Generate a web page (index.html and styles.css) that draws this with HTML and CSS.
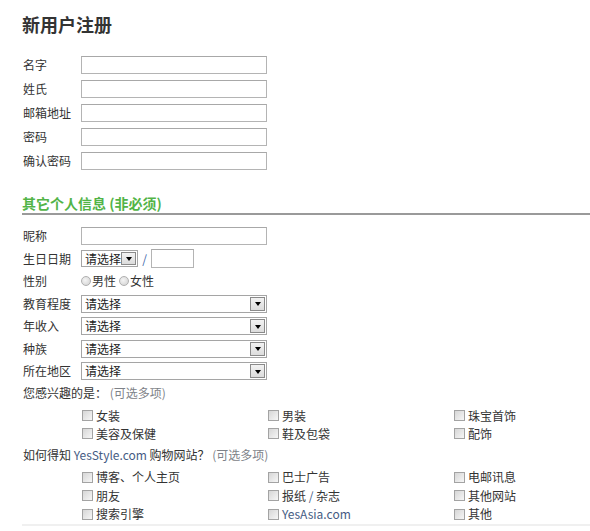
FILE: index.html
```html
<!DOCTYPE html>
<html lang="zh-CN">
<head>
<meta charset="utf-8">
<title>新用户注册</title>
<link rel="stylesheet" href="styles.css">
</head>
<body>
<div class="page">
  <h1 class="title">新用户注册</h1>

  <div class="basic">
    <div class="row"><span class="label">名字</span><span class="input wide"></span></div>
    <div class="row"><span class="label">姓氏</span><span class="input wide"></span></div>
    <div class="row"><span class="label">邮箱地址</span><span class="input wide"></span></div>
    <div class="row"><span class="label">密码</span><span class="input wide"></span></div>
    <div class="row"><span class="label">确认密码</span><span class="input wide"></span></div>
  </div>

  <h2 class="section">其它个人信息 (非必须)</h2>

  <div class="extra">
    <div class="xrow"><span class="label">昵称</span><span class="input wide"></span></div>
    <div class="xrow"><span class="label">生日日期</span>
      <span class="select small"><span class="sel-text">请选择</span><span class="arrow"><i class="tri"></i></span></span>
      <span class="slash">/</span>
      <span class="input year"></span>
    </div>
    <div class="xrow"><span class="label">性别</span>
      <span class="radio"></span><span class="opt">男性</span>
      <span class="radio r2"></span><span class="opt">女性</span>
    </div>
    <div class="xrow"><span class="label">教育程度</span><span class="select wide"><span class="sel-text">请选择</span><span class="arrow"><i class="tri"></i></span></span></div>
    <div class="xrow"><span class="label">年收入</span><span class="select wide"><span class="sel-text">请选择</span><span class="arrow"><i class="tri"></i></span></span></div>
    <div class="xrow"><span class="label">种族</span><span class="select wide"><span class="sel-text">请选择</span><span class="arrow"><i class="tri"></i></span></span></div>
    <div class="xrow"><span class="label">所在地区</span><span class="select wide"><span class="sel-text">请选择</span><span class="arrow"><i class="tri"></i></span></span></div>
  </div>

  <div class="question">您感兴趣的是： <span class="hint">(可选多项)</span></div>
  <div class="checks c1">
    <div class="chk"><span class="box"></span><span class="txt">女装</span></div>
    <div class="chk"><span class="box"></span><span class="txt">男装</span></div>
    <div class="chk"><span class="box"></span><span class="txt">珠宝首饰</span></div>
    <div class="chk"><span class="box"></span><span class="txt">美容及保健</span></div>
    <div class="chk"><span class="box"></span><span class="txt">鞋及包袋</span></div>
    <div class="chk"><span class="box"></span><span class="txt">配饰</span></div>
  </div>

  <div class="question q2">如何得知 <span class="brand">YesStyle.com</span> 购物网站？ <span class="hint">(可选多项)</span></div>
  <div class="checks c2">
    <div class="chk"><span class="box"></span><span class="txt">博客、个人主页</span></div>
    <div class="chk"><span class="box"></span><span class="txt">巴士广告</span></div>
    <div class="chk"><span class="box"></span><span class="txt">电邮讯息</span></div>
    <div class="chk"><span class="box"></span><span class="txt">朋友</span></div>
    <div class="chk"><span class="box"></span><span class="txt">报纸 <span class="brand">/</span> 杂志</span></div>
    <div class="chk"><span class="box"></span><span class="txt">其他网站</span></div>
    <div class="chk"><span class="box"></span><span class="txt">搜索引擎</span></div>
    <div class="chk"><span class="box"></span><span class="txt brand">YesAsia.com</span></div>
    <div class="chk"><span class="box"></span><span class="txt">其他</span></div>
  </div>
</div>
</body>
</html>
```

FILE: styles.css
```css
html, body {
  margin: 0;
  padding: 0;
  background: #fff;
}
body {
  font-family: "Noto Sans CJK SC", "Noto Sans", sans-serif;
  font-size: 12px;
  color: #333;
}
.page {
  padding-left: 22px;
}
.title {
  margin: 0;
  padding-top: 13px;
  font-size: 18px;
  line-height: 22px;
  font-weight: bold;
  color: #333;
}
.basic {
  margin-top: 21px;
  display: flex;
  flex-direction: column;
  gap: 6px;
}
.row {
  display: flex;
  align-items: center;
  height: 18px;
}
.label {
  width: 59px;
  flex: none;
  padding-left: 1px;
  box-sizing: border-box;
  line-height: 16px;
}
.input {
  display: block;
  box-sizing: border-box;
  height: 18px;
  border: 1px solid #b4b4b4;
  border-top-color: #a8a8a8;
  background: #fff;
}
.input.wide {
  width: 186px;
}
.input.year {
  width: 43px;
  height: 19px;
}
.section {
  margin: 24px 0 0 0;
  font-size: 14px;
  line-height: 18px;
  font-weight: bold;
  color: #52b447;
  padding-bottom: 1px;
  border-bottom: 2px solid #9a9a9a;
}
.extra {
  margin-top: 10px;
}
.xrow {
  display: flex;
  align-items: center;
  height: 22.5px;
}
.select {
  display: flex;
  align-items: center;
  box-sizing: border-box;
  height: 18px;
  border: 1px solid #a5a5a5;
  background: #fff;
  padding: 1px;
}
.select.wide {
  width: 186px;
}
.select.small {
  width: 57px;
  height: 17px;
}
.sel-text {
  flex: 1;
  padding-left: 2px;
  line-height: 14px;
  color: #222;
}
.arrow {
  display: flex;
  align-items: center;
  justify-content: center;
  box-sizing: border-box;
  width: 15px;
  height: 14px;
  border: 1px solid #8a8a8a;
  background: linear-gradient(#f2f2f2, #dcdcdc);
}
.select.small .arrow {
  height: 13px;
}
.tri {
  display: block;
  width: 0;
  height: 0;
  border-left: 3.5px solid transparent;
  border-right: 3.5px solid transparent;
  border-top: 4px solid #000;
  margin-top: 1px;
}
.slash {
  width: 13px;
  text-align: center;
  color: #4466aa;
}
.radio {
  display: block;
  box-sizing: border-box;
  width: 10px;
  height: 10px;
  border-radius: 50%;
  border: 1px solid #b0b0b0;
  background: radial-gradient(circle at 40% 40%, #f4f4f4, #d0d0d0);
}
.radio.r2 {
  margin-left: 3px;
}
.opt {
  padding-left: 1px;
  line-height: 16px;
}
.question {
  height: 20px;
  line-height: 20px;
  padding-left: 1px;
}
.hint {
  color: #7d8288;
}
.brand {
  color: #465c84;
}
.checks {
  display: grid;
  grid-template-columns: 186px 186px 1fr;
  padding-left: 59px;
}
.c1 {
  margin-top: 4px;
  grid-auto-rows: 18px;
}
.q2 {
  margin-top: 2.5px;
}
.c2 {
  margin-top: 3px;
  grid-auto-rows: 18.5px;
  border-bottom: 2px solid #f0f0f0;
}
.chk {
  display: flex;
  align-items: center;
  line-height: 16px;
  white-space: nowrap;
}
.txt {
  white-space: pre;
}
.box {
  display: block;
  flex: none;
  box-sizing: border-box;
  width: 11px;
  height: 11px;
  margin-left: 1px;
  margin-right: 3px;
  border: 1px solid #a3a3a3;
  background: linear-gradient(135deg, #d6d6d6, #f6f6f6);
}
```
